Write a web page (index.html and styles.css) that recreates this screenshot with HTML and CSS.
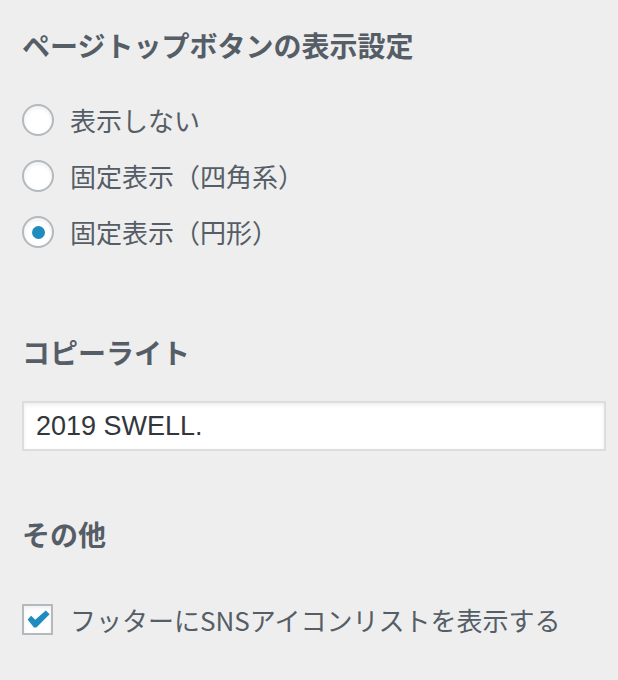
FILE: index.html
```html
<!DOCTYPE html>
<html lang="ja">
<head>
<meta charset="utf-8">
<title>カスタマイザー</title>
<link rel="stylesheet" href="styles.css">
</head>
<body>
<div class="panel">
  <section class="control">
    <h3 class="title">ページトップボタンの表示設定</h3>
    <ul class="choices">
      <li class="choice"><span class="radio"></span><span class="label">表示しない</span></li>
      <li class="choice"><span class="radio"></span><span class="label">固定表示（四角系）</span></li>
      <li class="choice"><span class="radio is-checked"><span class="dot"></span></span><span class="label">固定表示（円形）</span></li>
    </ul>
  </section>

  <section class="control control-copy">
    <h3 class="title">コピーライト</h3>
    <div class="textbox">2019 SWELL.</div>
  </section>

  <section class="control control-other">
    <h3 class="title">その他</h3>
    <div class="check-row">
      <span class="checkbox">
        <svg class="check" viewBox="0 0 31 31" width="31" height="31" aria-hidden="true">
          <path d="M5.6 15.4 L9.2 11.8 L13.2 15.8 L23.8 6.6 L27.6 10.2 L14.4 23.4 L12 23.4 Z" fill="#1e8cbe"/>
        </svg>
      </span>
      <span class="label">フッターにSNSアイコンリストを表示する</span>
    </div>
  </section>
</div>
</body>
</html>
```

FILE: styles.css
```css
html, body {
  margin: 0;
  padding: 0;
  background: #eeeeee;
}

body {
  font-family: "Noto Sans CJK JP", "Noto Sans", sans-serif;
  color: #555d66;
}

.panel {
  display: flex;
  flex-direction: column;
  padding: 26px 13px 0 22px;
}

.control {
  display: flex;
  flex-direction: column;
}

.title {
  margin: 0;
  font-size: 28px;
  font-weight: 700;
  line-height: 38px;
  color: #555d66;
}

.choices {
  list-style: none;
  margin: 40px 0 0;
  padding: 0;
  display: flex;
  flex-direction: column;
  gap: 24px;
}

.choice {
  display: flex;
  align-items: center;
  height: 32px;
}

.radio {
  box-sizing: border-box;
  flex: none;
  width: 32px;
  height: 32px;
  border: 2px solid #b4b9be;
  border-radius: 50%;
  background: #fff;
  box-shadow: inset 0 2px 4px rgba(0, 0, 0, 0.07);
  display: flex;
  align-items: center;
  justify-content: center;
}

.dot {
  width: 13px;
  height: 13px;
  border-radius: 50%;
  background: #1e8cbe;
}

.label {
  margin-left: 16px;
  font-size: 26px;
  line-height: 32px;
  color: #555d66;
}

.control-copy {
  margin-top: 85px;
}

.textbox {
  box-sizing: border-box;
  margin-top: 30px;
  width: 584px;
  height: 50px;
  border: 2px solid #dddddd;
  background: #fff;
  box-shadow: inset 0 2px 4px rgba(0, 0, 0, 0.07);
  padding: 0 12px;
  display: flex;
  align-items: center;
  font-family: "Liberation Sans", Arial, sans-serif;
  font-size: 27px;
  color: #32373c;
}

.control-other {
  margin-top: 64px;
}

.check-row {
  margin-top: 51px;
  display: flex;
  align-items: center;
  height: 31px;
}

.checkbox {
  box-sizing: border-box;
  flex: none;
  position: relative;
  width: 31px;
  height: 31px;
  border: 2px solid #b4b9be;
  background: #fff;
  box-shadow: inset 0 2px 4px rgba(0, 0, 0, 0.07);
}

.check {
  position: absolute;
  left: -2px;
  top: -2px;
}

.check-row .label {
  margin-left: 17px;
}
```
